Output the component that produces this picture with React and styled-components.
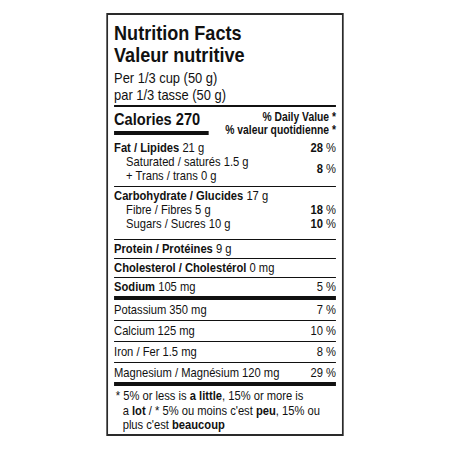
import React from 'react'
import styled, { createGlobalStyle } from 'styled-components'

const Global = createGlobalStyle`
  body {
    margin: 0;
    background: #fff;
  }
`

const Page = styled.div`
  width: 450px;
  height: 450px;
  display: flex;
  justify-content: center;
  align-items: flex-start;
  padding-top: 13px;
  box-sizing: border-box;
  font-family: 'Liberation Sans', Arial, sans-serif;
  color: #111;
`

/* the label uses a condensed grotesque; we squeeze Liberation Sans to match */
const Label = styled.div`
  width: 276px;
  box-sizing: border-box;
  border-style: solid;
  border-color: #2a2a2a;
  border-width: 2px 2.33px;
  padding: 0 7px;
  transform: scaleX(0.86);
  transform-origin: center top;
  flex-shrink: 0;
`

const Header = styled.div`
  padding: 7px 0 2px;
  border-bottom: 2px solid #111;
`

const Title = styled.div`
  font-size: 21px;
  line-height: 22px;
  font-weight: 700;
`

const Serving = styled.div`
  margin-top: 4px;
  font-size: 15px;
  line-height: 16.5px;
`

const CalRow = styled.div`
  display: flex;
  justify-content: space-between;
  align-items: flex-start;
`

const Calories = styled.div`
  padding: 3px 0 2px;
  width: 110px;
  font-size: 17px;
  line-height: 19px;
  font-weight: 700;
  border-bottom: 4px solid #111;
`

const DailyHead = styled.div`
  padding-top: 4px;
  font-size: 12px;
  line-height: 12.5px;
  font-weight: 700;
  text-align: right;
  white-space: nowrap;
`

const Group = styled.div`
  padding: ${p => p.$pad};
  border-bottom: ${p => p.$rule || 1}px solid #111;
`

const Row = styled.div`
  display: flex;
  justify-content: space-between;
  align-items: center;
  font-size: 13px;
  line-height: 14px;
  padding-left: ${p => (p.$indent ? '14px' : '0')};
  white-space: nowrap;
`

const SubPair = styled.div`
  display: flex;
  justify-content: space-between;
  align-items: center;
  font-size: 13px;
  line-height: 14px;
`

const Footnote = styled.div`
  padding: 3px 0 1.5px 10px;
  font-size: 13px;
  line-height: 14.5px;
  text-indent: -8px;
  white-space: nowrap;
`

const Percent = ({ value, bold }) =>
  value ? (
    <span>
      {bold ? <b>{value}</b> : value} %
    </span>
  ) : null

const Line = ({ name, amount, value, bold, indent }) => (
  <Row $indent={indent}>
    <span>
      {name}
      {amount ? ' ' + amount : ''}
    </span>
    <Percent value={value} bold={bold} />
  </Row>
)

export default function App() {
  return (
    <Page>
      <Global />
      <Label>
        <Header>
          <Title>Nutrition Facts</Title>
          <Title>Valeur nutritive</Title>
          <Serving>
            Per 1/3 cup (50 g)
            <br />
            par 1/3 tasse (50 g)
          </Serving>
        </Header>
        <CalRow>
          <Calories>Calories 270</Calories>
          <DailyHead>
            % Daily Value *
            <br />
            % valeur quotidienne *
          </DailyHead>
        </CalRow>
        <Group $pad="5px 0 3px">
          <Line name={<b>Fat / Lipides</b>} amount="21 g" value="28" bold />
          <SubPair>
            <div>
              <Line indent name="Saturated / saturés 1.5 g" />
              <Line indent name="+ Trans / trans 0 g" />
            </div>
            <Percent value="8" bold />
          </SubPair>
        </Group>
        <Group $pad="2px 0 8px">
          <Line name={<b>Carbohydrate / Glucides</b>} amount="17 g" />
          <Line indent name="Fibre / Fibres 5 g" value="18" bold />
          <Line indent name="Sugars / Sucres 10 g" value="10" bold />
        </Group>
        <Group $pad="2px 0 2px">
          <Line name={<b>Protein / Protéines</b>} amount="9 g" />
        </Group>
        <Group $pad="2px 0 2px">
          <Line name={<b>Cholesterol / Cholestérol</b>} amount="0 mg" />
        </Group>
        <Group $pad="2px 0 2px" $rule={4}>
          <Line name={<b>Sodium</b>} amount="105 mg" value="5" />
        </Group>
        <Group $pad="3px 0 3px">
          <Line name="Potassium 350 mg" value="7" />
        </Group>
        <Group $pad="3px 0 3px">
          <Line name="Calcium 125 mg" value="10" />
        </Group>
        <Group $pad="3px 0 3px">
          <Line name="Iron / Fer 1.5 mg" value="8" />
        </Group>
        <Group $pad="3px 0 2px" $rule={4}>
          <Line name="Magnesium / Magnésium 120 mg" value="29" />
        </Group>
        <Footnote>
          * 5% or less is <b>a little</b>, 15% or more is
          <br />
          a <b>lot</b> / * 5% ou moins c'est <b>peu</b>, 15% ou
          <br />
          plus c'est <b>beaucoup</b>
        </Footnote>
      </Label>
    </Page>
  )
}
